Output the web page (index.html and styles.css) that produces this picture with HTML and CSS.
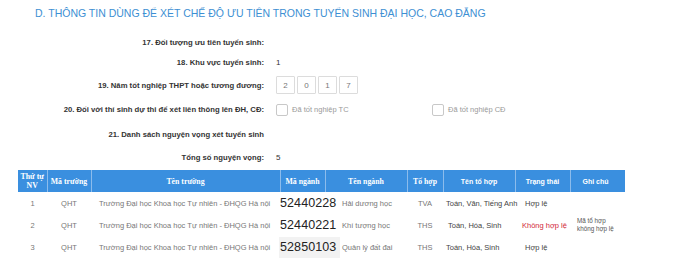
FILE: index.html
```html
<!DOCTYPE html>
<html lang="vi">
<head>
<meta charset="utf-8">
<title>Thông tin ưu tiên</title>
<link rel="stylesheet" href="styles.css">
</head>
<body>
<div class="page">
  <h2 class="title">D. THÔNG TIN DÙNG ĐỂ XÉT CHẾ ĐỘ ƯU TIÊN TRONG TUYỂN SINH ĐẠI HỌC, CAO ĐẲNG</h2>
  <div class="form">
    <div class="label r1">17. Đối tượng ưu tiên tuyển sinh:</div>
    <div class="value r1"></div>
    <div class="label r2">18. Khu vực tuyển sinh:</div>
    <div class="value r2">1</div>
    <div class="label r3">19. Năm tốt nghiệp THPT hoặc tương đương:</div>
    <div class="value r3">
      <div class="digits">
        <span class="digit">2</span><span class="digit">0</span><span class="digit">1</span><span class="digit">7</span>
      </div>
    </div>
    <div class="label r4">20. Đối với thí sinh dự thi để xét liên thông lên ĐH, CĐ:</div>
    <div class="value r4">
      <label class="check first"><span class="box"></span>Đã tốt nghiệp TC</label>
      <label class="check"><span class="box"></span>Đã tốt nghiệp CĐ</label>
    </div>
    <div class="label r5">21. Danh sách nguyện vọng xét tuyển sinh</div>
    <div class="value r5"></div>
    <div class="label r6">Tổng số nguyện vọng:</div>
    <div class="value r6">5</div>
  </div>
  <table class="grid">
    <colgroup>
      <col class="c1"><col class="c2"><col class="c3"><col class="c4"><col class="c5"><col class="c6"><col class="c7"><col class="c8"><col class="c9">
    </colgroup>
    <thead>
      <tr>
        <th class="serif">Thứ tự<br>NV</th>
        <th class="serif">Mã trường</th>
        <th class="serif">Tên trường</th>
        <th class="serif">Mã ngành</th>
        <th class="serif">Tên ngành</th>
        <th class="serif">Tổ hợp</th>
        <th class="sans">Tên tổ hợp</th>
        <th class="sans">Trạng thái</th>
        <th class="sans left">Ghi chú</th>
      </tr>
    </thead>
    <tbody>
      <tr>
        <td class="center">1</td>
        <td class="center">QHT</td>
        <td class="school">Trường Đại học Khoa học Tự nhiên - ĐHQG Hà nội</td>
        <td class="code"><span>52440228</span></td>
        <td class="major">Hải dương học</td>
        <td class="center">TVA</td>
        <td class="combo">Toán, Văn, Tiếng Anh</td>
        <td class="status">Hợp lệ</td>
        <td class="note"></td>
      </tr>
      <tr>
        <td class="center">2</td>
        <td class="center">QHT</td>
        <td class="school">Trường Đại học Khoa học Tự nhiên - ĐHQG Hà nội</td>
        <td class="code"><span>52440221</span></td>
        <td class="major">Khí tượng học</td>
        <td class="center">THS</td>
        <td class="combo c-2">Toán, Hóa, Sinh</td>
        <td class="status bad">Không hợp lệ</td>
        <td class="note">Mã tổ hợp<br>không hợp lệ</td>
      </tr>
      <tr>
        <td class="center">3</td>
        <td class="center">QHT</td>
        <td class="school">Trường Đại học Khoa học Tự nhiên - ĐHQG Hà nội</td>
        <td class="code"><span class="shaded">52850103</span></td>
        <td class="major">Quản lý đất đai</td>
        <td class="center">THS</td>
        <td class="combo">Toán, Hóa, Sinh</td>
        <td class="status">Hợp lệ</td>
        <td class="note"></td>
      </tr>
    </tbody>
  </table>
</div>
</body>
</html>
```

FILE: styles.css
```css
* { box-sizing: border-box; }
html, body { margin: 0; padding: 0; background: #fff; }
body { font-family: "Liberation Sans", Arial, sans-serif; color: #333; }
.page { width: 700px; height: 263px; overflow: hidden; }

.title {
  margin: 0;
  height: 26px;
  line-height: 26px;
  padding-left: 35px;
  font-size: 10.5px;
  font-weight: normal;
  color: #3d8fd3;
  white-space: nowrap;
}

.form {
  margin-top: 6px;
  display: grid;
  grid-template-columns: 264px 1fr;
  grid-template-rows: 20px 21px 24px 25px 25px 21px;
  column-gap: 12px;
}
.label {
  text-align: right;
  font-size: 7.7px;
  font-weight: bold;
  color: #333;
  white-space: nowrap;
  display: flex;
  align-items: center;
  justify-content: flex-end;
}
.value {
  font-size: 8px;
  color: #333;
  display: flex;
  align-items: center;
}
.digits { display: flex; gap: 2px; }
.digit {
  width: 19px;
  height: 18px;
  border: 1px solid #dcdcdc;
  border-radius: 1px;
  display: flex;
  align-items: center;
  justify-content: center;
  color: #777;
  font-size: 8px;
}
.check {
  display: flex;
  align-items: center;
  color: #9a9a9a;
  font-size: 7.5px;
}
.check.first { width: 156px; }
.box {
  width: 12px;
  height: 12px;
  border: 1px solid #c8c8c8;
  border-radius: 2px;
  margin-right: 4px;
  background: #fff;
}

.grid {
  margin-top: 2px;
  margin-left: 18px;
  width: 607px;
  table-layout: fixed;
  border-collapse: collapse;
}
.c1 { width: 29px; } .c2 { width: 44px; } .c3 { width: 189px; }
.c4 { width: 45px; } .c5 { width: 82px; } .c6 { width: 36px; }
.c7 { width: 72px; } .c8 { width: 55px; } .c9 { width: 55px; }

.grid th {
  background: #3a8fdf;
  color: #fff;
  height: 22px;
  padding: 0;
  font-size: 7.8px;
  font-weight: bold;
  line-height: 9px;
  text-align: center;
  border-right: 1px solid #8cbcec;
}
.grid th:last-child { border-right: none; }
.grid th.serif { font-family: "Liberation Serif", "Times New Roman", serif; }
.grid th.sans { font-family: "Liberation Sans", Arial, sans-serif; font-size: 7px; }
.grid th.left { text-align: left; padding-left: 12px; }

.grid td {
  height: 22px;
  padding: 0;
  font-size: 7.5px;
  color: #777;
  white-space: nowrap;
  vertical-align: middle;
}
.grid td.center { text-align: center; }
.grid td.school { padding-left: 8px; color: #777; }
.grid td.code { overflow: visible; }
.grid td.code span {
  display: inline-block;
  font-size: 12.5px;
  color: #222;
  letter-spacing: 0.1px;
  line-height: 21px;
  padding: 0 4px 0 0;
}
.grid td.code span.shaded { background: #f2f2f2; margin-left: -1px; padding-left: 1px; }
.grid td.major { padding-left: 17px; color: #777; }
.grid td.combo { padding-left: 3px; color: #444; }
.grid td.combo.c-2 { padding-left: 5px; }
.grid td.status { padding-left: 10px; color: #444; }
.grid td.status.bad { padding-left: 7px; color: #d2283a; }
.grid td.note { font-size: 6.3px; line-height: 8px; color: #555; padding-left: 7px; }
```
